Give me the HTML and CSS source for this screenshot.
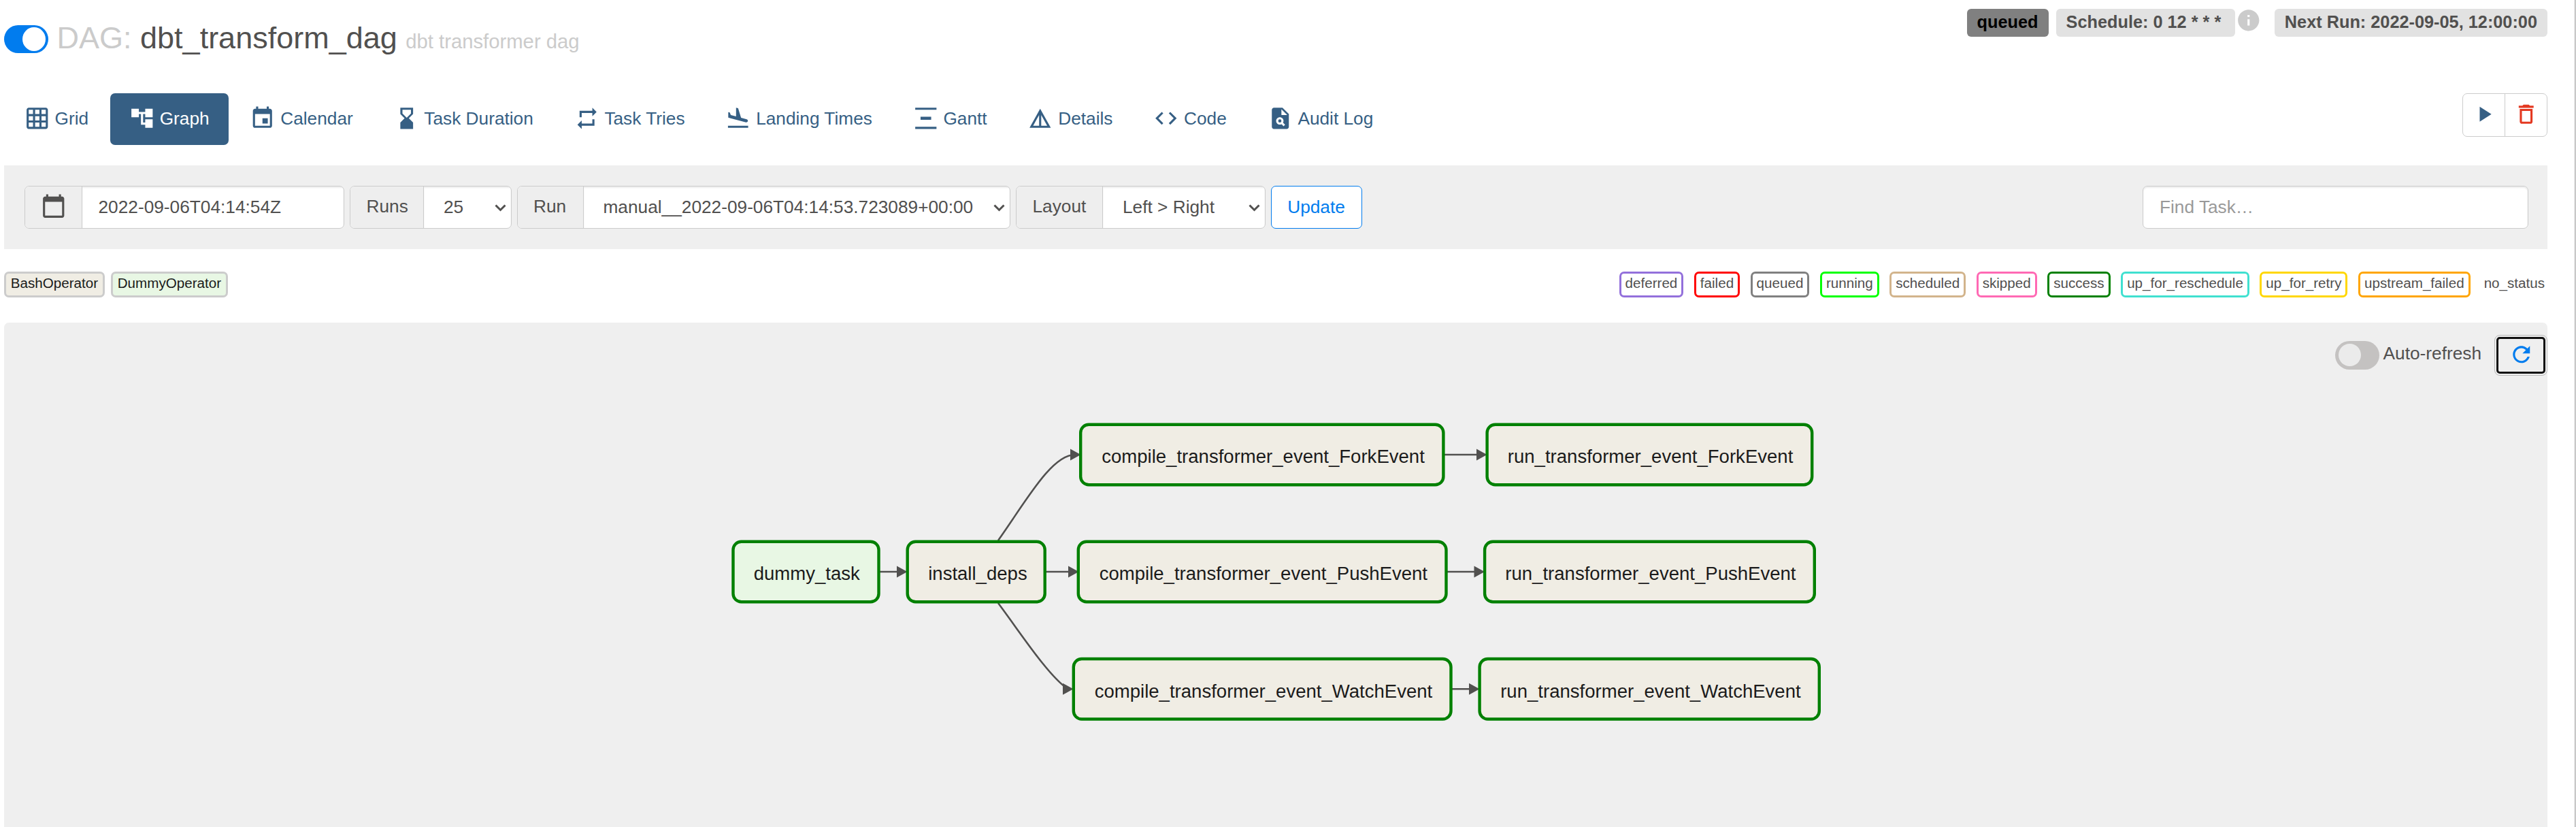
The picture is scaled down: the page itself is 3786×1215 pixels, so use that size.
FILE: index.html
```html
<!DOCTYPE html>
<html lang="en">
<head>
<meta charset="utf-8">
<title>dbt_transform_dag - Graph</title>
<link rel="stylesheet" href="styles.css">
</head>
<body>
<div class="page">
  <header class="header">
    <div class="heading">
      <span class="switch switch-on"><span class="knob"></span></span>
      <h3 class="title"><span class="muted">DAG:</span> <span>dbt_transform_dag</span> <small class="muted">dbt transformer dag</small></h3>
    </div>
    <div class="labels">
      <span class="label label-queued">queued</span>
      <span class="label label-schedule">Schedule: 0 12 * * *</span>
      <svg class="icon info" viewBox="0 0 24 24"><path d="M12 2C6.48 2 2 6.48 2 12s4.48 10 10 10 10-4.48 10-10S17.52 2 12 2zm1 15h-2v-6h2v6zm0-8h-2V7h2v2z"/></svg>
      <span class="label label-next">Next Run: 2022-09-05, 12:00:00</span>
    </div>
  </header>

  <div class="navrow">
    <nav class="nav">
      <a class="tab"><svg class="icon" viewBox="0 0 24 24"><path d="M20 2H4c-1.1 0-2 .9-2 2v16c0 1.1.9 2 2 2h16c1.1 0 2-.9 2-2V4c0-1.1-.9-2-2-2zM8 20H4v-4h4v4zm0-6H4v-4h4v4zm0-6H4V4h4v4zm6 12h-4v-4h4v4zm0-6h-4v-4h4v4zm0-6h-4V4h4v4zm6 12h-4v-4h4v4zm0-6h-4v-4h4v4zm0-6h-4V4h4v4z"/></svg>Grid</a>
      <a class="tab active"><svg class="icon" viewBox="0 0 24 24"><path d="M22 11V3h-7v3H9V3H2v8h7V8h2v10h4v3h7v-8h-7v3h-2V8h2v3z"/></svg>Graph</a>
      <a class="tab"><svg class="icon" viewBox="0 0 24 24"><path d="M17 12h-5v5h5v-5zM16 1v2H8V1H6v2H5c-1.11 0-1.99.9-1.99 2L3 19c0 1.1.89 2 2 2h14c1.1 0 2-.9 2-2V5c0-1.1-.9-2-2-2h-1V1h-2zm3 18H5V8h14v11z"/></svg>Calendar</a>
      <a class="tab"><svg class="icon" viewBox="0 0 24 24"><path d="M18 22l-.01-6L14 12l3.99-4.01L18 2H6v6l4 4-4 3.99V22h12zM8 7.5V4h8v3.5l-4 4-4-4z"/></svg>Task Duration</a>
      <a class="tab"><svg class="icon" viewBox="0 0 24 24"><path d="M7 7h10v3l4-4-4-4v3H5v6h2V7zm10 10H7v-3l-4 4 4 4v-3h12v-6h-2v4z"/></svg>Task Tries</a>
      <a class="tab"><svg class="icon" viewBox="0 0 24 24"><path d="M2.5 19h19v2h-19zm7.18-5.73l4.35 1.16 5.31 1.42c.8.21 1.62-.26 1.84-1.06.21-.8-.26-1.62-1.06-1.84l-5.31-1.42-2.76-9.02L10.12 2v8.28L5.15 8.95l-.93-2.32-1.45-.39v5.17l1.6.43 5.31 1.43z"/></svg>Landing Times</a>
      <a class="tab"><svg class="icon" viewBox="0 0 24 24"><path d="M22 2v2H2V2h20zM7 10.5v3h10v-3H7zM2 20v2h20v-2H2z"/></svg>Gantt</a>
      <a class="tab"><svg class="icon" viewBox="0 0 24 24"><path d="M12 3L2 21h20L12 3zm1 5.92L18.6 19H13V8.92zm-2 0V19H5.4L11 8.92z"/></svg>Details</a>
      <a class="tab"><svg class="icon" viewBox="0 0 24 24"><path d="M9.4 16.6L4.8 12l4.6-4.6L8 6l-6 6 6 6 1.4-1.4zm5.2 0l4.6-4.6-4.6-4.6L16 6l6 6-6 6-1.4-1.4z"/></svg>Code</a>
      <a class="tab"><svg class="icon" viewBox="0 0 24 24"><path d="M14 2H6c-1.1 0-2 .9-2 2v16c0 1.1.89 2 1.99 2H18c1.1 0 2-.9 2-2V8l-6-6zm1.04 17.45l-1.88-1.88c-1.33.71-3.01.53-4.13-.59-1.37-1.37-1.37-3.58 0-4.95 1.37-1.37 3.58-1.37 4.95 0 1.12 1.12 1.3 2.8.59 4.13l1.88 1.88-1.41 1.41zM13 9V3.5L18.5 9H13z"/><circle cx="11.5" cy="14.5" r="1.5"/></svg>Audit Log</a>
    </nav>
    <div class="actions">
      <a class="action play"><svg class="icon" viewBox="0 0 24 24"><path d="M8 5v14l11-7z"/></svg></a>
      <a class="action trash"><svg class="icon" viewBox="0 0 24 24"><path d="M6 19c0 1.1.9 2 2 2h8c1.1 0 2-.9 2-2V7H6v12zM8 9h8v10H8V9zm7.5-5l-1-1h-5l-1 1H5v2h14V4z"/></svg></a>
    </div>
  </div>

  <div class="filters">
    <div class="filter-left">
      <div class="group group-date">
        <span class="addon"><svg class="icon" viewBox="0 0 24 24"><path d="M20 3h-1V1h-2v2H7V1H5v2H4c-1.1 0-2 .9-2 2v16c0 1.1.9 2 2 2h16c1.1 0 2-.9 2-2V5c0-1.1-.9-2-2-2zm0 18H4V8h16v13z"/></svg></span>
        <span class="control">2022-09-06T04:14:54Z</span>
      </div>
      <div class="group group-runs">
        <span class="addon">Runs</span>
        <span class="control select">25<svg class="chevron" viewBox="0 0 17 11"><path d="M1.5 1.5l7 7 7-7"/></svg></span>
      </div>
      <div class="group group-run">
        <span class="addon">Run</span>
        <span class="control select">manual__2022-09-06T04:14:53.723089+00:00<svg class="chevron" viewBox="0 0 17 11"><path d="M1.5 1.5l7 7 7-7"/></svg></span>
      </div>
      <div class="group group-layout">
        <span class="addon">Layout</span>
        <span class="control select">Left &gt; Right<svg class="chevron" viewBox="0 0 17 11"><path d="M1.5 1.5l7 7 7-7"/></svg></span>
      </div>
      <a class="update">Update</a>
    </div>
    <div class="search">Find Task…</div>
  </div>

  <div class="legend">
    <div class="operators">
      <span class="tag bash">BashOperator</span>
      <span class="tag dummy">DummyOperator</span>
    </div>
    <div class="states">
      <span class="tag deferred">deferred</span>
      <span class="tag failed">failed</span>
      <span class="tag queued">queued</span>
      <span class="tag running">running</span>
      <span class="tag scheduled">scheduled</span>
      <span class="tag skipped">skipped</span>
      <span class="tag success">success</span>
      <span class="tag reschedule">up_for_reschedule</span>
      <span class="tag retry">up_for_retry</span>
      <span class="tag upstream">upstream_failed</span>
      <span class="tag nostatus">no_status</span>
    </div>
  </div>

  <main class="graph">
    <svg class="dag" viewBox="6 474 3738 741">
      <g class="edges">
        <path d="M1293 840H1320M1537 840H1572M2123 668H2172M2127 840H2168M2134 1012.3H2161"/>
        <path d="M1467 794C1507 738 1545 668 1580 668"/>
        <path d="M1467 886C1500 930 1540 992 1569 1012"/>
      </g>
      <g class="heads">
        <path d="M1318 831.5l15.5 8.5-15.5 8.5z"/>
        <path d="M1570 831.5l15.5 8.5-15.5 8.5z"/>
        <path d="M1573 659.5l15.5 8.5-15.5 8.5z"/>
        <path d="M1562 1003.8l15.5 8.5-15.5 8.5z"/>
        <path d="M2170 659.5l15.5 8.5-15.5 8.5z"/>
        <path d="M2166.5 831.5l15.5 8.5-15.5 8.5z"/>
        <path d="M2159 1003.8l15.5 8.5-15.5 8.5z"/>
      </g>
      <g class="nodes">
        <rect class="dummy-node" x="1077.5" y="795.7" width="214" height="88.5" rx="12"/>
        <rect x="1333.7" y="795.7" width="202" height="88.5" rx="12"/>
        <rect x="1588.2" y="623.7" width="533.2" height="88.5" rx="12"/>
        <rect x="1584.8" y="795.7" width="540.7" height="88.5" rx="12"/>
        <rect x="1577.8" y="968" width="554.7" height="88.5" rx="12"/>
        <rect x="2185.6" y="623.7" width="477.6" height="88.5" rx="12"/>
        <rect x="2182.1" y="795.7" width="484.7" height="88.5" rx="12"/>
        <rect x="2174.6" y="968" width="499.2" height="88.5" rx="12"/>
      </g>
      <g class="names">
        <text x="1107.7" y="852">dummy_task</text>
        <text x="1364.2" y="852">install_deps</text>
        <text x="1619.2" y="679.7">compile_transformer_event_ForkEvent</text>
        <text x="1615.7" y="852">compile_transformer_event_PushEvent</text>
        <text x="1608.7" y="1024.5">compile_transformer_event_WatchEvent</text>
        <text x="2215.8" y="679.7">run_transformer_event_ForkEvent</text>
        <text x="2212.3" y="852">run_transformer_event_PushEvent</text>
        <text x="2205.2" y="1024.5">run_transformer_event_WatchEvent</text>
      </g>
    </svg>
    <div class="refresh-bar">
      <span class="switch switch-off"><span class="knob"></span></span>
      <span class="auto">Auto-refresh</span>
      <a class="refresh"><svg class="icon" viewBox="0 0 24 24"><path d="M17.65 6.35C16.2 4.9 14.21 4 12 4c-4.42 0-7.99 3.58-7.99 8s3.57 8 7.99 8c3.73 0 6.84-2.55 7.73-6h-2.08c-.82 2.33-3.04 4-5.65 4-3.31 0-6-2.69-6-6s2.69-6 6-6c1.66 0 3.14.69 4.22 1.78L13 11h7V4l-2.35 2.35z"/></svg></a>
    </div>
  </main>
</div>
</body>
</html>
```
FILE: styles.css
```css
* { box-sizing: border-box; }
body {
  margin: 0;
  background: #fff;
  color: #51504f;
  font-family: "Liberation Sans", Arial, sans-serif;
  font-size: 26.25px;
}
.page {
  height: 1215px;
  padding: 0 40px 0 6px;
  border-right: 2px solid #c8c8c8;
  box-shadow: inset -1px 0 #eee;
  display: flex;
  flex-direction: column;
  overflow: hidden;
}
.icon { width: 37.5px; height: 37.5px; fill: currentColor; flex: none; display: block; }
.muted { color: #cbcbcb; }

.header { height: 136.5px; flex: none; display: flex; justify-content: space-between; align-items: flex-start; }
.heading { display: flex; align-items: flex-start; padding-top: 25px; }
.title { margin: 0 0 0 12.5px; font-size: 45px; font-weight: 400; line-height: 61px; white-space: nowrap; }
.title small { font-size: 29.25px; }
.switch { display: flex; width: 65px; height: 41px; border-radius: 21px; flex: none; }
.knob { border-radius: 50%; }
.switch-on { background: #017cee; justify-content: flex-end; padding: 3px 4px 0 0; margin-top: 12px; }
.switch-on .knob { width: 34px; height: 35px; background: #fff; }
.labels { display: flex; padding-top: 13px; }
.label {
  height: 40.5px; border-radius: 6px; padding: 0 15px; background: #e2e2e2;
  font-size: 25.3px; font-weight: 700; line-height: 38px; white-space: nowrap;
}
.label-queued { background: #808080; color: #000; margin-right: 11px; }
.label-schedule { padding-right: 21px; margin-right: 1px; }
.info { color: #cbcbcb; margin: -2.5px 19px 0 0; }

.navrow { height: 106.5px; flex: none; display: flex; justify-content: space-between; align-items: flex-start; }
.nav { display: flex; gap: 3.6px; padding-left: 1.6px; }
.tab {
  display: flex; align-items: center; gap: 7.3px; height: 76px; padding: 1px 28.1px 0;
  border-radius: 7px; color: #365f84; line-height: 37.5px; white-space: nowrap;
}
.tab .icon { margin-top: -3px; }
.tab.active { background: #365f84; color: #fff; }
.actions { display: flex; width: 125px; height: 64px; border: 1px solid #ccc; border-radius: 7px; }
.action { flex: 1; display: flex; justify-content: center; padding-top: 11px; }
.play { color: #365f84; border-right: 1px solid #ccc; }
.trash { color: #e43921; }

.filters {
  height: 123px; flex: none; background: #efefef; display: flex; justify-content: space-between;
  align-items: flex-start; padding: 30px 28.5px 0 29.5px;
}
.filter-left { display: flex; gap: 8px; }
.group { display: flex; height: 63px; border: 1px solid #ccc; border-radius: 7px; overflow: hidden; background: #fff; line-height: 61px; white-space: nowrap; }
.group-date { width: 470.5px; }
.group-runs { width: 237.5px; }
.group-run { width: 725.5px; }
.group-layout { width: 366.5px; }
.addon { flex: none; background: #eee; border-right: 1px solid #ccc; padding-left: 23.5px; line-height: 58px; }
.group-date .addon { width: 84px; padding: 10px 0 0 23px; }
.group-runs .addon { width: 108px; }
.group-run .addon { width: 97px; }
.group-layout .addon { width: 127px; }
.control { flex: 1; display: flex; align-items: center; justify-content: space-between; padding: 0 7px 0 24px; box-shadow: inset 0 2px 2px rgba(0, 0, 0, .075); }
.select { padding-left: 29px; }
.chevron { width: 17px; height: 11px; flex: none; fill: none; stroke: #51504f; stroke-width: 3; margin-top: 2px; }
.update { width: 134px; height: 63px; border: 1.5px solid #017cee; border-radius: 7px; background: #fff; color: #017cee; line-height: 61px; text-align: center; }
.search { width: 566.5px; height: 63px; border: 1px solid #ccc; border-radius: 7px; background: #fff; color: #999; line-height: 61px; padding-left: 24px; box-shadow: inset 0 2px 2px rgba(0, 0, 0, .075); }

.legend { height: 108px; flex: none; display: flex; justify-content: space-between; align-items: flex-start; padding-top: 33px; font-size: 20.625px; }
.operators { display: flex; gap: 9px; }
.states { display: flex; gap: 15.5px; }
.tag { height: 37.5px; border: 3px solid #ccc; border-radius: 7px; padding: 0 6px; line-height: 28px; white-space: nowrap; }
.operators .tag { color: #1b1b1b; padding: 0 6.8px; }
.bash { background: #f0ede4; }
.dummy { background: #e8f7e4; }
.deferred { border-color: mediumpurple; }
.failed { border-color: red; }
.queued { border-color: gray; }
.running { border-color: lime; }
.scheduled { border-color: tan; }
.skipped { border-color: hotpink; }
.success { border-color: green; }
.reschedule { border-color: turquoise; }
.retry { border-color: gold; }
.upstream { border-color: orange; }
.states .nostatus { border-color: transparent; padding: 0 1px 0 1.5px; }

.graph { position: relative; flex: none; height: 741px; background: #efefef; border-radius: 7px 7px 0 0; }
.dag { display: block; width: 3738px; height: 741px; }
.edges { fill: none; stroke: #51504f; stroke-width: 2.6; }
.heads { fill: #51504f; }
.nodes rect { fill: #f0ede4; stroke: #008000; stroke-width: 4.4; }
.nodes .dummy-node { fill: #e8f7e4; }
.names { font-size: 27.56px; fill: #1b1b1b; }
.refresh-bar { position: absolute; top: 18px; right: 0; display: flex; align-items: center; }
.switch-off { background: #c4c2c1; padding: 4px 0 0 5px; height: 42px; }
.switch-off .knob { width: 33px; height: 33px; background: #ebebeb; }
.auto { margin: -5px 19px 0 6px; line-height: 37px; }
.refresh {
  width: 78px; height: 60px; padding: 9px 0 0 20px; border: 1px solid #b8b8b8; border-radius: 8px; color: #017cee;
  outline: 3px solid #101010; outline-offset: -6px;
}
```
